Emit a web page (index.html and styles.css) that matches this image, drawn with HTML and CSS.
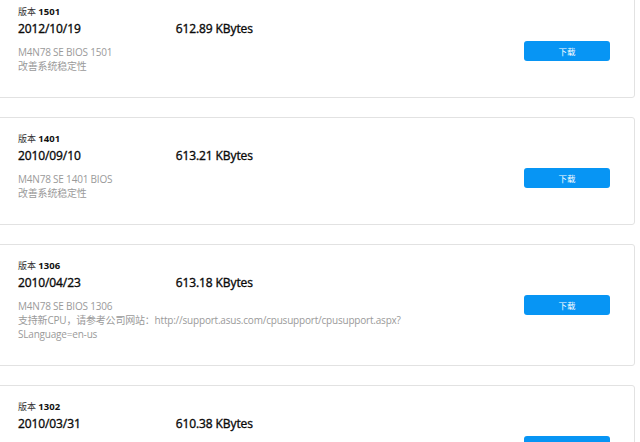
FILE: index.html
```html
<!DOCTYPE html>
<html lang="zh-CN">
<head>
    <meta charset="UTF-8">
    <meta name="viewport" content="width=device-width, initial-scale=1.0">
    <title>BIOS 下载</title>
    <link rel="stylesheet" href="styles.css">
</head>
<body>
    <div class="list">
        <div class="card">
            <div class="info">
                <div class="version">版本 <b>1501</b></div>
                <div class="meta">
                    <span class="date">2012/10/19</span>
                    <span class="size">612.89 KBytes</span>
                </div>
                <div class="desc">M4N78 SE BIOS 1501<br>改善系统稳定性</div>
            </div>
            <button class="download">下载</button>
        </div>

        <div class="card">
            <div class="info">
                <div class="version">版本 <b>1401</b></div>
                <div class="meta">
                    <span class="date">2010/09/10</span>
                    <span class="size">613.21 KBytes</span>
                </div>
                <div class="desc">M4N78 SE 1401 BIOS<br>改善系统稳定性</div>
            </div>
            <button class="download">下载</button>
        </div>

        <div class="card">
            <div class="info">
                <div class="version">版本 <b>1306</b></div>
                <div class="meta">
                    <span class="date">2010/04/23</span>
                    <span class="size">613.18 KBytes</span>
                </div>
                <div class="desc">M4N78 SE BIOS 1306<br>支持新CPU，请参考公司网站：http://support.asus.com/cpusupport/cpusupport.aspx?<br>SLanguage=en-us</div>
            </div>
            <button class="download">下载</button>
        </div>

        <div class="card">
            <div class="info">
                <div class="version">版本 <b>1302</b></div>
                <div class="meta">
                    <span class="date">2010/03/31</span>
                    <span class="size">610.38 KBytes</span>
                </div>
                <div class="desc">M4N78 SE BIOS 1302<br>改善系统稳定性</div>
            </div>
            <button class="download">下载</button>
        </div>
    </div>
</body>
</html>
```

FILE: styles.css
```css
body {
    margin: 0;
    background: #fff;
    font-family: "Open Sans", "Noto Sans CJK SC", sans-serif;
    color: #111;
}
.list {
    margin: -10px 5px 0 -10px;
}
.card {
    display: flex;
    justify-content: space-between;
    align-items: flex-start;
    border: 1px solid #e2e2e2;
    border-radius: 3px;
    padding: 14px 24px 24px 27px;
    margin-bottom: 19px;
}
.version {
    font-size: 9px;
    line-height: 14px;
    color: #333;
}
.version b {
    color: #111;
    font-size: 9.5px;
    font-weight: 700;
}
.meta {
    font-size: 12px;
    line-height: 20px;
    color: #0a0a0a;
    letter-spacing: -0.1px;
    -webkit-text-stroke: 0.35px #0a0a0a;
}
.size {
    margin-left: 92px;
}
.desc {
    margin-top: 6px;
    font-size: 10px;
    line-height: 14px;
    letter-spacing: -0.2px;
    color: #9a9a9a;
}
.download {
    margin-top: 36px;
    width: 86px;
    height: 20px;
    border: none;
    border-radius: 3px;
    background-color: #0795f4;
    color: #fff;
    font-family: "Noto Sans CJK SC", sans-serif;
    font-size: 8.5px;
    cursor: pointer;
}
```
